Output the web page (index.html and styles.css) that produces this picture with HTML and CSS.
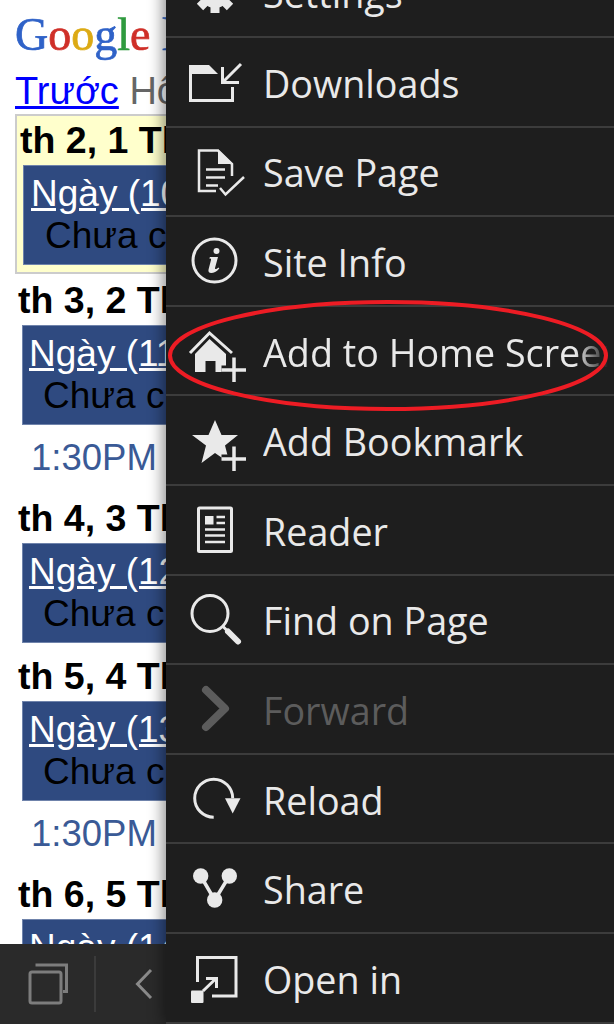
FILE: index.html
```html
<!DOCTYPE html>
<html lang="vi">
<head>
    <meta charset="UTF-8">
    <meta name="viewport" content="width=device-width, initial-scale=1.0">
    <title>Add to Home Screen</title>
    <link rel="stylesheet" href="styles.css">
</head>
<body>
<div class="screen">
    <div class="page">
        <div class="logo"><span class="c-blue">G</span><span class="c-red">o</span><span class="c-yellow">o</span><span class="c-blue">g</span><span class="c-green">l</span><span class="c-red">e</span> <span class="c-blue">l</span></div>
        <div class="nav"><a href="#">Trước</a> <span class="nav-today">Hôm</span></div>

        <div class="today">
            <div class="day-title">th 2, 1 Th</div>
            <div class="event">
                <a href="#">Ngày (10</a>
                <p>Chưa c</p>
            </div>
        </div>

        <div class="day">
            <div class="day-title">th 3, 2 Th</div>
            <div class="event">
                <a href="#">Ngày (11</a>
                <p>Chưa c</p>
            </div>
            <div class="time">1:30PM</div>
        </div>
        <div class="day">
            <div class="day-title">th 4, 3 Th</div>
            <div class="event">
                <a href="#">Ngày (12</a>
                <p>Chưa c</p>
            </div>
        </div>
        <div class="day">
            <div class="day-title">th 5, 4 Th</div>
            <div class="event">
                <a href="#">Ngày (13</a>
                <p>Chưa c</p>
            </div>
            <div class="time">1:30PM</div>
        </div>
        <div class="day">
            <div class="day-title">th 6, 5 Th</div>
            <div class="event">
                <a href="#">Ngày (14</a>
            </div>
        </div>
    </div>

    <div class="toolbar">
        <svg class="tool-tabs" viewBox="0 0 44 44" width="44" height="44">
            <path class="line" d="M10 4.500V3H39.500V29.500H36"/>
            <rect class="line" x="3" y="10" width="31" height="31" rx="2"/>
        </svg>
        <div class="tool-divider"></div>
        <svg class="tool-back" viewBox="0 0 18 32" width="18" height="32">
            <path class="line" d="M16 2L2.500 16L16 30"/>
        </svg>
    </div>

    <div class="menu">
        <div class="menu-row">
            <svg class="icon" viewBox="0 0 64 64">
                <circle class="solid" cx="29" cy="32" r="16"/>
                <path class="tooth" d="M29 11V53M8 32H50M14 17L44 47M44 17L14 47"/>
            </svg>
            <span class="label">Settings</span>
        </div>
        <div class="menu-row">
            <svg class="icon" viewBox="0 0 64 64">
                <path class="solid" d="M3 15h20l9 9H3z"/>
                <path class="line" d="M4.500 23V50.500H46.500V37"/>
                <path class="line" d="M55 14L37 32M36.500 17V32.500H53"/>
            </svg>
            <span class="label">Downloads</span>
        </div>
        <div class="menu-row">
            <svg class="icon" viewBox="0 0 64 64">
                <path class="line thin" d="M46 37V25L32 11.500H13V52H30"/>
                <path class="solid" d="M32 10.500L47 25H32z"/>
                <path class="line thin" d="M20 30.500H39M20 38.500H39M20 46.500H32M34 49L39.500 55.500L58 38"/>
            </svg>
            <span class="label">Save Page</span>
        </div>
        <div class="menu-row">
            <svg class="icon" viewBox="0 0 64 64">
                <circle class="line" cx="28.500" cy="31.500" r="21.500"/>
                <circle class="solid" cx="30.500" cy="22" r="3"/>
                <path class="solid" d="M24 28h8l-3 11c-.300 1.300.800 1.500 3.500-.500l.800 1c-3 3.500-5.500 4.500-8 4.500-2.500 0-3.300-1.500-2.700-3.800l2.400-9.200c.300-1.200-.300-1.500-1.800-1.500z"/>
            </svg>
            <span class="label">Site Info</span>
        </div>
        <div class="menu-row">
            <svg class="icon" viewBox="0 0 64 64">
                <path class="line" d="M4 34L23.500 14L46 34"/>
                <path class="solid" d="M9 53V35L23.500 20L40 35V53H29.500V42H19.500V53z"/>
                <path class="gap" d="M48 38V63M35.500 51H60"/>
                <path class="line bold" d="M48 38.500V63M35.500 51H60"/>
            </svg>
            <span class="label fade">Add to Home Screen</span>
        </div>
        <div class="menu-row">
            <svg class="icon" viewBox="0 0 64 64">
                <path class="solid" d="M29 12L35.500 27H52L39 37.500L43.500 55L29 45L15.500 55L20 37.500L6 27H22.500z"/>
                <path class="gap" d="M48 38V63M35.500 51H60"/>
                <path class="line bold" d="M48 38.500V63M35.500 51H60"/>
            </svg>
            <span class="label">Add Bookmark</span>
        </div>
        <div class="menu-row">
            <svg class="icon" viewBox="0 0 64 64">
                <rect class="line" x="12.500" y="10" width="33" height="43.500" rx="1"/>
                <rect class="solid" x="19" y="18" width="8.500" height="8.500"/>
                <path class="line thin" d="M30.500 19H39M30.500 25H39M19 31.500H39M19 37.500H39M19 44H39"/>
            </svg>
            <span class="label">Reader</span>
        </div>
        <div class="menu-row">
            <svg class="icon" viewBox="0 0 64 64">
                <circle class="line" cx="24" cy="26.500" r="18"/>
                <path class="line" d="M36.500 39L42 44.500"/>
                <path class="handle" d="M42 44.500L52 54.500"/>
            </svg>
            <span class="label">Find on Page</span>
        </div>
        <div class="menu-row is-disabled">
            <svg class="icon" viewBox="0 0 64 64">
                <path class="chevron" d="M20 13L39 31.500L20 50"/>
            </svg>
            <span class="label">Forward</span>
        </div>
        <div class="menu-row">
            <svg class="icon" viewBox="0 0 64 64">
                <path class="line" d="M27.700 50.200A19 19 0 1 1 46.700 31.200"/>
                <path class="solid" d="M39 31.200H54.500L46.700 46.500z"/>
            </svg>
            <span class="label">Reload</span>
        </div>
        <div class="menu-row">
            <svg class="icon" viewBox="0 0 64 64">
                <path class="line bold" d="M14.700 20L28.700 44L43.300 20"/>
                <circle class="solid" cx="14.700" cy="20" r="7.700"/>
                <circle class="solid" cx="43.300" cy="20" r="7.700"/>
                <circle class="solid" cx="28.700" cy="44" r="7.700"/>
            </svg>
            <span class="label">Share</span>
        </div>
        <div class="menu-row">
            <svg class="icon" viewBox="0 0 64 64">
                <path class="line" d="M11.500 36V11.500H50V50H26"/>
                <rect class="solid" x="5" y="44.500" width="12.500" height="12.500" rx="1"/>
                <path class="line" d="M17 45L30 32.500M20 32.500H30.500V42"/>
            </svg>
            <span class="label">Open in</span>
        </div>
    </div>

    <svg class="callout" viewBox="0 0 446 116" width="446" height="116">
        <ellipse cx="220" cy="55.500" rx="218" ry="53.500"/>
    </svg>
</div>
</body>
</html>
```

FILE: styles.css
```css
html, body {
    margin: 0;
    padding: 0;
}
.screen {
    position: relative;
    width: 614px;
    height: 1024px;
    overflow: hidden;
    display: flex;
    flex-direction: column;
    background-color: #fff;
    font-family: "Liberation Sans", Arial, sans-serif;
}
.page {
    flex: 1;
    min-height: 0;
    overflow: hidden;
    white-space: nowrap;
}
.logo {
    height: 71px;
    padding-left: 15px;
    box-sizing: border-box;
    font-family: "Liberation Serif", serif;
    font-size: 46px;
    line-height: 70px;
    -webkit-text-stroke: 0.7px;
    filter: blur(0.6px);
}
.c-blue { color: #2f62c8; }
.c-red { color: #cf2f28; }
.c-yellow { color: #dcaa14; }
.c-green { color: #2f9a3e; }
.nav {
    margin: 0 0 3px 15px;
    font-size: 38px;
    line-height: 40px;
    color: #666;
}
.nav a {
    color: #00f;
}
.today {
    width: 220px;
    margin-left: 15px;
    margin-bottom: 6px;
    padding: 4px 0 7px 3px;
    border: 2px solid #ccc;
    background-color: #ffc;
}
.today .event {
    margin-left: 3px;
    padding-left: 7px;
}
.day {
    margin-left: 18px;
    margin-bottom: 13px;
}
.day-title {
    font-size: 37.5px;
    font-weight: bold;
    line-height: 40px;
    margin-bottom: 5px;
    color: #000;
}
.event {
    width: 220px;
    height: 100px;
    box-sizing: border-box;
    margin-left: 4px;
    padding: 7px 0 0 6px;
    border: 1px solid #6f83ab;
    background-color: #2f4a80;
    font-size: 37px;
    line-height: 42px;
}
.event a {
    color: #fff;
}
.event p {
    margin: 0 0 0 14px;
    color: #000;
}
.time {
    margin: 13px 0 20px 13px;
    font-size: 36.5px;
    line-height: 40px;
    color: #3a5a96;
}
.day:has(.time) {
    margin-bottom: 0;
}
.toolbar {
    position: relative;
    flex: none;
    height: 80px;
    display: flex;
    align-items: center;
    background-color: #2a2a2a;
    color: #7d7d7d;
}
.tool-tabs {
    margin-left: 27px;
}
.tool-divider {
    width: 2px;
    height: 56px;
    margin-left: 23px;
    background-color: #3b3b3b;
}
.tool-back {
    margin-left: 39px;
    color: #8a8a8a;
}
.menu {
    position: absolute;
    top: -51.5px;
    left: 166px;
    right: 0;
    background-color: #1e1e1e;
    box-shadow: -3px 0 14px rgba(0, 0, 0, 0.45);
    color: #e9e9e9;
    font-family: "Open Sans", "Noto Sans", sans-serif;
}
.menu-row {
    display: flex;
    align-items: center;
    height: 89.6px;
    box-sizing: border-box;
    padding-left: 20px;
    border-bottom: 2px solid #3c3c3c;
}
.is-disabled {
    color: #5c5c5c;
}
.icon {
    flex: none;
    width: 64px;
    height: 64px;
    overflow: visible;
}
.label {
    flex: none;
    width: 345px;
    margin-left: 13px;
    padding-top: 4px;
    overflow: hidden;
    white-space: nowrap;
    font-size: 37.7px;
    line-height: 50px;
}
.fade {
    -webkit-mask-image: linear-gradient(to right, #000 312px, transparent 345px);
    mask-image: linear-gradient(to right, #000 312px, transparent 345px);
}
.solid {
    fill: currentColor;
}
.line {
    fill: none;
    stroke: currentColor;
    stroke-width: 3;
}
.thin {
    stroke-width: 2.5;
}
.bold {
    stroke-width: 3.5;
}
.tooth {
    fill: none;
    stroke: currentColor;
    stroke-width: 9;
}
.gap {
    fill: none;
    stroke: #1e1e1e;
    stroke-width: 9;
}
.handle {
    fill: none;
    stroke: currentColor;
    stroke-width: 6;
    stroke-linecap: round;
}
.chevron {
    fill: none;
    stroke: currentColor;
    stroke-width: 8;
    stroke-linecap: round;
    stroke-linejoin: round;
}
.callout {
    position: absolute;
    top: 300px;
    left: 168px;
}
.callout ellipse {
    fill: none;
    stroke: #ed1c24;
    stroke-width: 4;
}
```
